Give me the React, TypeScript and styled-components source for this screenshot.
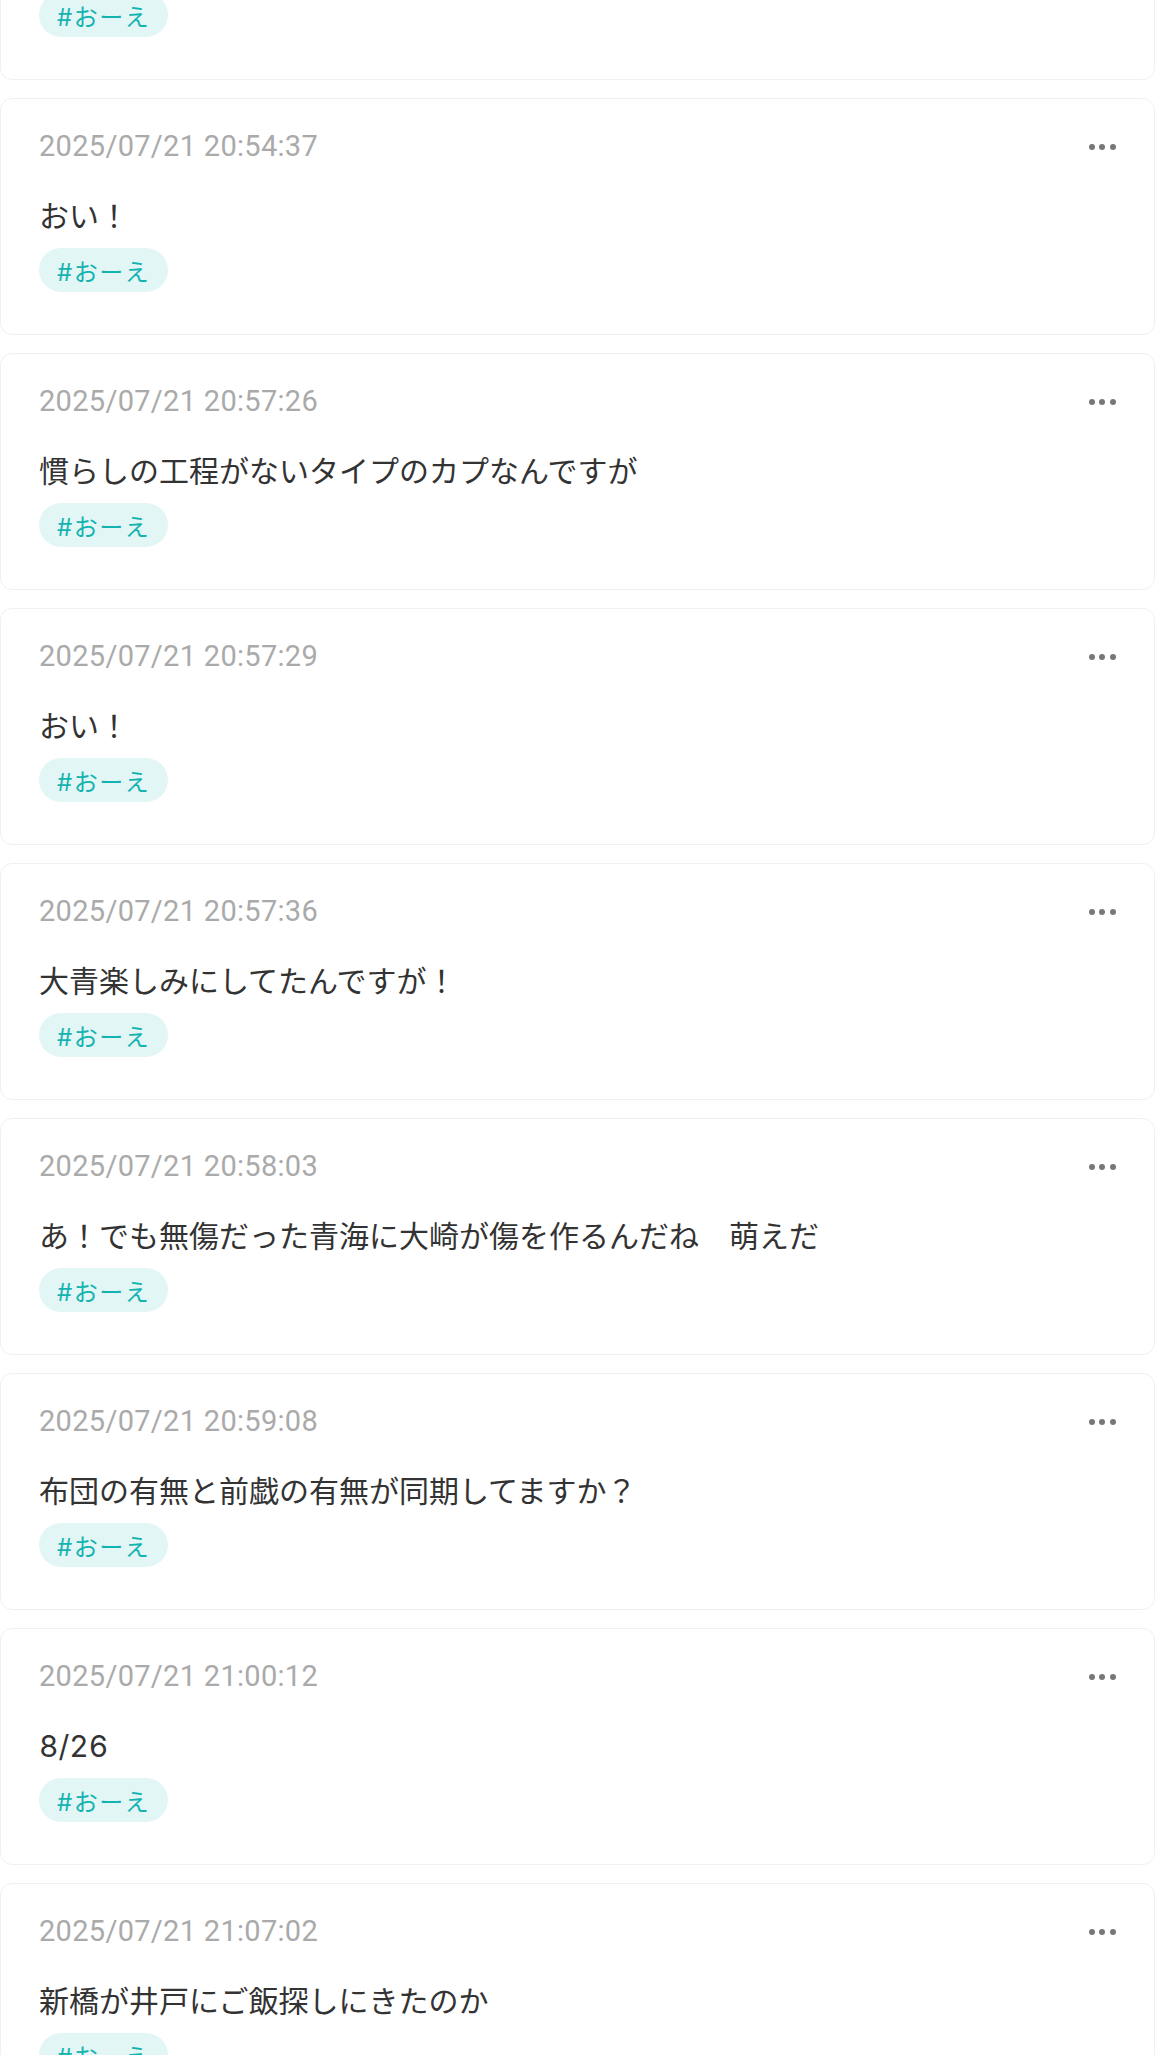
import React from "react";
import styled, { createGlobalStyle } from "styled-components";

const GlobalStyle = createGlobalStyle`
  html, body {
    margin: 0;
    padding: 0;
    background: #ffffff;
  }
  body {
    font-family: "Inter", "Noto Sans CJK JP", sans-serif;
    color: #333333;
  }
`;

const List = styled.main`
  display: flex;
  flex-direction: column;
  gap: 18px;
  margin-top: -157px;
  padding-right: 1px;
`;

const Card = styled.article`
  border: 1px solid #f0f0f0;
  border-radius: 12px;
  background: #ffffff;
  padding: 26px 38px 42px 38px;
  display: flex;
  flex-direction: column;
`;

const Header = styled.header`
  display: flex;
  align-items: center;
  justify-content: space-between;
  height: 42px;
`;

const Timestamp = styled.time`
  font-family: "Roboto", "Noto Sans CJK JP", sans-serif;
  font-size: 29px;
  line-height: 42px;
  color: #aaaaaa;
  letter-spacing: 0.3px;
`;

const MoreButton = styled.button`
  display: flex;
  gap: 4.6px;
  align-items: center;
  padding: 0;
  margin-top: 2px;
  border: none;
  background: transparent;
  cursor: pointer;
`;

const Dot = styled.span`
  width: 6px;
  height: 6px;
  border-radius: 50%;
  background: #777777;
`;

const Body = styled.p`
  margin: 28px 0 0 0;
  font-size: 30px;
  line-height: 42px;
  letter-spacing: 0;
  font-variant-numeric: tabular-nums;
  color: #333333;
`;

const Tags = styled.div`
  display: flex;
  gap: 8px;
  margin-top: 11px;
`;

const Tag = styled.span`
  display: inline-flex;
  align-items: center;
  height: 44px;
  padding: 0 18px;
  border-radius: 22px;
  background: #e3f6f6;
  color: #14b3b0;
  font-size: 24px;
  letter-spacing: 1.5px;
`;

type Post = { time: string; text: string; tags: string[] };

const posts: Post[] = [
  { time: "2025/07/21 20:52:48", text: "おい！", tags: ["#おーえ"] },
  { time: "2025/07/21 20:54:37", text: "おい！", tags: ["#おーえ"] },
  { time: "2025/07/21 20:57:26", text: "慣らしの工程がないタイプのカプなんですが", tags: ["#おーえ"] },
  { time: "2025/07/21 20:57:29", text: "おい！", tags: ["#おーえ"] },
  { time: "2025/07/21 20:57:36", text: "大青楽しみにしてたんですが！", tags: ["#おーえ"] },
  { time: "2025/07/21 20:58:03", text: "あ！でも無傷だった青海に大崎が傷を作るんだね　萌えだ", tags: ["#おーえ"] },
  { time: "2025/07/21 20:59:08", text: "布団の有無と前戯の有無が同期してますか？", tags: ["#おーえ"] },
  { time: "2025/07/21 21:00:12", text: "8/26", tags: ["#おーえ"] },
  { time: "2025/07/21 21:07:02", text: "新橋が井戸にご飯探しにきたのか", tags: ["#おーえ"] },
];

export default function App() {
  return (
    <>
      <GlobalStyle />
      <List>
        {posts.map((p, i) => (
          <Card key={i}>
            <Header>
              <Timestamp>{p.time}</Timestamp>
              <MoreButton aria-label="more">
                <Dot />
                <Dot />
                <Dot />
              </MoreButton>
            </Header>
            <Body>{p.text}</Body>
            <Tags>
              {p.tags.map((t) => (
                <Tag key={t}>{t}</Tag>
              ))}
            </Tags>
          </Card>
        ))}
      </List>
    </>
  );
}
